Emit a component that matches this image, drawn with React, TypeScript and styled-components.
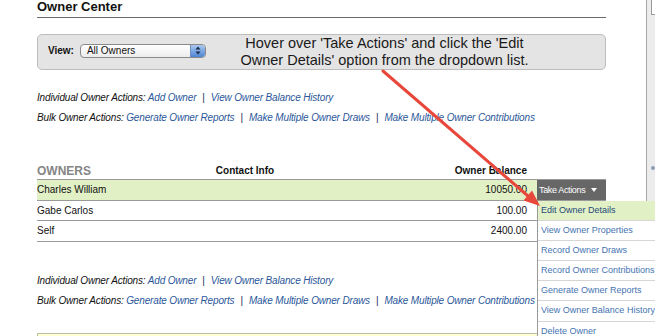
import React from "react";
import styled, { createGlobalStyle } from "styled-components";

const Global = createGlobalStyle`
  html, body { margin: 0; padding: 0; background: #fff; overflow: hidden; }
  body { font-family: "Liberation Sans", Arial, Helvetica, sans-serif; color: #111; }
`;

const Page = styled.div`
  position: relative;
  width: 655px;
  height: 336px;
  display: flex;
  overflow: hidden;
`;

const Main = styled.div`
  flex: none;
  width: 569px;
  margin-left: 37px;
`;

const Spacer = styled.div`
  flex: 1;
`;

const SidePanel = styled.div`
  flex: none;
  width: 8px;
  border-left: 1px solid #a8a8a8;
  background: #ececec;
  display: flex;
  flex-direction: column;
`;

const SideTab = styled.div`
  width: 6px;
  height: 15px;
  margin-left: 4px;
  box-sizing: border-box;
  border: 1px solid #9a9a9a;
  border-top: none;
  background: #fff;
`;

const SideDot = styled.div`
  width: 4px;
  height: 4px;
  border-radius: 50%;
  background: #8e9cb3;
  margin: 151px 0 0 4px;
`;

const Title = styled.div`
  font-size: 13px;
  font-weight: bold;
  line-height: 13px;
  padding-bottom: 4px;
  border-bottom: 1px solid #6a6a6a;
  color: #111;
`;

const ViewBar = styled.div`
  margin-top: 16px;
  height: 36px;
  box-sizing: border-box;
  border: 1px solid #bdbdbd;
  border-radius: 5px;
  background: #e4e4e4;
  display: flex;
  align-items: center;
  padding-left: 10px;
`;

const ViewLabel = styled.span`
  font-size: 10px;
  font-weight: bold;
  margin-top: -3px;
`;

const FakeSelect = styled.div`
  margin: -3px 0 0 6px;
  width: 126px;
  height: 14px;
  box-sizing: border-box;
  border: 1px solid #8a8a8a;
  border-radius: 4px;
  background: linear-gradient(#ffffff, #ececec);
  display: flex;
  align-items: center;
  justify-content: space-between;
  padding-left: 6px;
  font-size: 10px;
  overflow: hidden;
`;

const Stepper = styled.div`
  width: 14px;
  height: 12px;
  border-left: 1px solid #6f8fc0;
  border-radius: 0 3px 3px 0;
  background: linear-gradient(#a9c8f0, #4f86d4);
  display: flex;
  align-items: center;
  justify-content: center;
`;

const Callout = styled.div`
  flex: 1;
  padding-right: 42px;
  text-align: center;
  font-size: 14.5px;
  line-height: 17px;
  color: #1a1a1a;
  white-space: nowrap;
`;

const ActionLine = styled.div`
  font-size: 10px;
  font-style: italic;
  line-height: 20px;
  letter-spacing: -0.16px;
  color: #111;
  white-space: nowrap;
`;

const ActionGroup = styled.div<{ $top: number }>`
  margin-top: ${(p) => p.$top}px;
`;

const Link = styled.a`
  color: #2b579a;
  text-decoration: none;
`;

const Sep = styled.span`
  color: #1a2a55;
  margin: 0 6px;
  font-style: normal;
`;

const Table = styled.div`
  margin-top: 34px;
`;

const cols = "120px 176px 204px 69px";

const HeadRow = styled.div`
  display: grid;
  grid-template-columns: ${cols};
  align-items: center;
  height: 17px;
  border-bottom: 1px solid #9a9a9a;
`;

const Owners = styled.div`
  font-size: 12px;
  font-weight: bold;
  color: #858585;
`;

const HeadCell = styled.div<{ $align: string }>`
  font-size: 10px;
  font-weight: bold;
  text-align: ${(p) => p.$align};
  padding-right: ${(p) => (p.$align === "right" ? "10px" : "0")};
`;

const Row = styled.div<{ $hl?: boolean }>`
  display: grid;
  grid-template-columns: ${cols};
  align-items: stretch;
  height: 19.5px;
  border-bottom: 1px solid #9a9a9a;
  background: ${(p) => (p.$hl ? "#e2f0c6" : "#fff")};
  font-size: 10px;
`;

const Cell = styled.div<{ $align?: string }>`
  display: flex;
  align-items: center;
  justify-content: ${(p) => (p.$align === "right" ? "flex-end" : "flex-start")};
  padding-right: ${(p) => (p.$align === "right" ? "10px" : "0")};
`;

const ActionsCell = styled.div`
  position: relative;
`;

const TakeActions = styled.div`
  height: 100%;
  background: #676767;
  color: #fff;
  font-size: 9px;
  letter-spacing: -0.35px;
  display: flex;
  align-items: center;
  padding-left: 2px;
  gap: 6px;
`;

const Caret = styled.span`
  width: 0;
  height: 0;
  border-left: 3px solid transparent;
  border-right: 3px solid transparent;
  border-top: 4px solid #fff;
`;

const Dropdown = styled.div`
  position: absolute;
  top: calc(100% + 1px);
  left: 0;
  width: 128px;
  background: #fff;
  border-left: 1px solid #9a9a9a;
  z-index: 5;
`;

const DropItem = styled.div<{ $active?: boolean }>`
  height: 19.2px;
  line-height: 19px;
  border-bottom: 1px solid #d6d6d6;
  padding-left: 3px;
  font-size: 9px;
  white-space: nowrap;
  background: ${(p) => (p.$active ? "#e2f0c6" : "#fff")};
  color: ${(p) => (p.$active ? "#1d4a79" : "#4574b2")};
`;

const NoteBox = styled.div`
  margin-top: 22px;
  height: 30px;
  border: 1px solid #bdbdaa;
  background: #ffffd2;
`;

const ArrowLayer = styled.svg`
  position: absolute;
  left: 0;
  top: 0;
  pointer-events: none;
  z-index: 10;
`;

const menu = [
  "Edit Owner Details",
  "View Owner Properties",
  "Record Owner Draws",
  "Record Owner Contributions",
  "Generate Owner Reports",
  "View Owner Balance History",
  "Delete Owner",
];

const owners = [
  { name: "Charles William", balance: "10050.00" },
  { name: "Gabe Carlos", balance: "100.00" },
  { name: "Self", balance: "2400.00" },
];

function Actions({ top }: { top: number }) {
  return (
    <ActionGroup $top={top}>
      <ActionLine>
        Individual Owner Actions: <Link>Add Owner</Link>
        <Sep>|</Sep>
        <Link>View Owner Balance History</Link>
      </ActionLine>
      <ActionLine>
        Bulk Owner Actions: <Link>Generate Owner Reports</Link>
        <Sep>|</Sep>
        <Link>Make Multiple Owner Draws</Link>
        <Sep>|</Sep>
        <Link>Make Multiple Owner Contributions</Link>
      </ActionLine>
    </ActionGroup>
  );
}

export default function App() {
  return (
    <Page>
      <Global />
      <Main>
        <Title>Owner Center</Title>
        <ViewBar>
          <ViewLabel>View:</ViewLabel>
          <FakeSelect>
            <span>All Owners</span>
            <Stepper>
              <svg width="6" height="9" viewBox="0 0 6 9">
                <path d="M3 0.5 L5.5 3.5 H0.5 Z M3 8.5 L5.5 5.5 H0.5 Z" fill="#1b2a45" />
              </svg>
            </Stepper>
          </FakeSelect>
          <Callout>
            Hover over 'Take Actions' and click the 'Edit
            <br />
            Owner Details' option from the dropdown list.
          </Callout>
        </ViewBar>
        <Actions top={18} />
        <Table>
          <HeadRow>
            <Owners>OWNERS</Owners>
            <HeadCell $align="center">Contact Info</HeadCell>
            <HeadCell $align="right">Owner Balance</HeadCell>
            <div />
          </HeadRow>
          {owners.map((o, i) => (
            <Row key={o.name} $hl={i === 0}>
              <Cell>{o.name}</Cell>
              <Cell />
              <Cell $align="right">{o.balance}</Cell>
              <ActionsCell>
                {i === 0 && (
                  <>
                    <TakeActions>
                      Take Actions <Caret />
                    </TakeActions>
                    <Dropdown>
                      {menu.map((m, j) => (
                        <DropItem key={m} $active={j === 0}>
                          {m}
                        </DropItem>
                      ))}
                    </Dropdown>
                  </>
                )}
              </ActionsCell>
            </Row>
          ))}
        </Table>
        <Actions top={29} />
        <NoteBox />
      </Main>
      <Spacer />
      <SidePanel>
        <SideTab />
        <SideDot />
      </SidePanel>
      <ArrowLayer width="655" height="336" viewBox="0 0 655 336">
        <line x1="383" y1="71" x2="528" y2="196" stroke="#e8473b" strokeWidth="3" strokeLinecap="round" />
        <polygon points="540,206 523.5,200.5 532,190.5" fill="#e8473b" />
      </ArrowLayer>
    </Page>
  );
}
